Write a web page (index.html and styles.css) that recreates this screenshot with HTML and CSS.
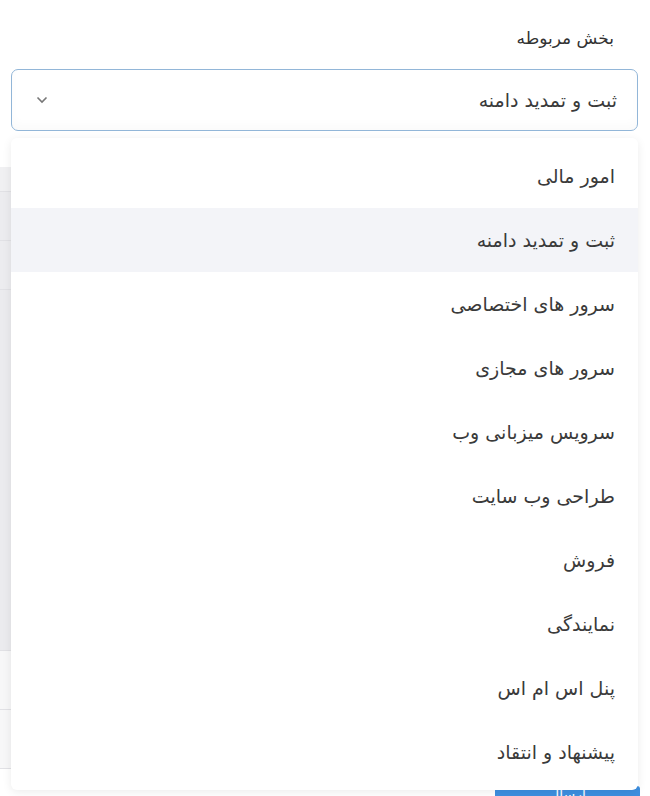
FILE: index.html
```html
<!DOCTYPE html>
<html lang="fa" dir="rtl">
<head>
	<meta charset="UTF-8">
	<title>بخش مربوطه</title>
	<link rel="stylesheet" href="styles.css">
</head>
<body>
<div class="page">
   <div class="field">
      <label class="label">بخش مربوطه</label>
      <div class="select">
         <span class="value">ثبت و تمدید دامنه</span>
         <svg class="arrow" width="12" height="8" viewBox="0 0 12 8"><path d="M1.5 1.5 L6 6 L10.5 1.5" fill="none" stroke="#777" stroke-width="1.6"/></svg>
      </div>
   </div>
   <!-- جدول پشت منو -->
   <div class="table">
      <div class="row head"></div>
      <div class="row dark"></div>
      <div class="row dark"></div>
      <div class="row body"></div>
      <div class="row light"></div>
      <div class="row light"></div>
   </div>
   <div class="actions">
      <div class="btn">ارسال</div>
   </div>

   <ul class="menu">
      <li>امور مالی</li>
      <li class="active">ثبت و تمدید دامنه</li>
      <li>سرور های اختصاصی</li>
      <li>سرور های مجازی</li>
      <li>سرویس میزبانی وب</li>
      <li>طراحی وب سایت</li>
      <li>فروش</li>
      <li>نمایندگی</li>
      <li>پنل اس ام اس</li>
      <li>پیشنهاد و انتقاد</li>
   </ul>
</div>
</body>
</html>
```
FILE: styles.css
```css
html,body{
   margin: 0;
   background: #fff;
}
.page{
   position: relative;
   width: 650px;
   height: 796px;
   overflow: hidden;
   direction: rtl;
   font-family: "DejaVu Sans", "Noto Sans", sans-serif;
   color: #3a3a3a;
}
.field{
   padding: 27px 12px 0 11px;
}
.label{
   display: block;
   padding-right: 24px;
   font-size: 17px;
   line-height: 22px;
   color: #333;
   margin-bottom: 20px;
}
.select{
   height: 60px;
   border: 1px solid #92b6d8;
   border-radius: 7px;
   display: flex;
   align-items: center;
   justify-content: space-between;
   padding: 0 20px 0 24px;
   box-shadow: inset 0 -6px 10px rgba(0,0,0,0.02);
}
.select .value{
   font-size: 19px;
   color: #3a3a3a;
}
.select .arrow{
   display: block;
}
.table{
   margin-top: 36px;
   margin-left: 0;
   margin-right: 80px;
}
.table .row{
   height: 24px;
   border-bottom: 1px solid #e1e1e5;
}
.table .head{
   background: #f0f0f2;
}
.table .dark{
   height: 48px;
   background: #ececef;
}
.table .body{
   height: 360px;
   background: #ebebee;
}
.table .light{
   height: 58px;
   background: #f7f7f8;
}
.actions{
   display: flex;
   justify-content: flex-start;
   padding: 0 10px 0 0;
   margin-top: 17px;
}
.btn{
   width: 145px;
   height: 36px;
   background: #3d8fe0;
   border-radius: 3px;
   color: #fff;
   font-size: 14px;
   text-align: center;
   line-height: 16px;
}
.menu{
   position: absolute;
   top: 138px;
   left: 11px;
   width: 627px;
   margin: 0;
   padding: 6px 0;
   list-style: none;
   background: #fff;
   border-radius: 6px;
   box-shadow: 0 2px 10px rgba(0,0,0,0.08);
}
.menu li{
   height: 64px;
   line-height: 64px;
   padding-right: 23px;
   font-size: 19px;
   color: #3a3a3a;
}
.menu li.active{
   background: #f3f4f8;
}
```
